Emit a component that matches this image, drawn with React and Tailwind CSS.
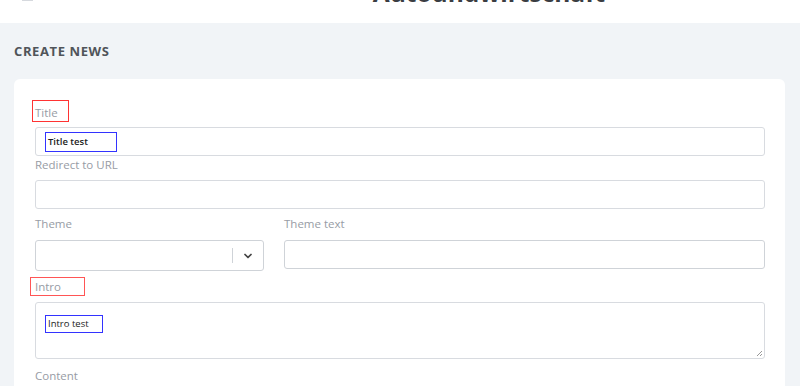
import React from "react";

const Label = ({ children, className = "" }) => (
  <div className={`text-[11.5px] text-[#979ca5] leading-[12px] ${className}`}>{children}</div>
);

const App = () => {
  return (
    <div className="h-screen overflow-hidden bg-[#f1f4f7]" style={{ fontFamily: "'Open Sans', sans-serif" }}>
      {/* Header */}
      <header className="h-[23px] bg-white overflow-hidden relative">
        <div className="absolute left-[22px] top-0 h-[1px] w-[11px] bg-[#d6d9de]" />
        <div className="flex justify-center pl-[178px]">
          <h1 className="text-[24.5px] font-bold text-[#3a3d42] leading-none -mt-[19px]">
            Autoundwirtschaft
          </h1>
        </div>
      </header>

      <main className="px-[14px] pt-[22px]">
        <h2 className="text-[13px] font-bold text-[#50545a] uppercase tracking-[0.6px] leading-[13px]">
          Create News
        </h2>

        <div className="mt-[21px] rounded-[6px] bg-white pl-[21px] pr-[20px] pt-[21px] pb-6 w-[771px]">
          {/* Title */}
          <Label>
            <span className="inline-block border border-[#ff3333] -ml-[3px] pl-[2px] pr-[10px] pt-[6px] pb-[2px]">
              Title
            </span>
          </Label>
          <div className="mt-[5px] h-[29px] rounded-[3px] border border-[#d8dbe0] flex items-center pl-[9px]">
            <span className="inline-block border border-[#3333ff] w-[72px] h-[20px] pl-[2px] text-[9.5px] font-semibold text-[#222] leading-[18px]">
              Title test
            </span>
          </div>

          {/* Redirect */}
          <Label className="mt-[3px]">Redirect to URL</Label>
          <div className="mt-[9px] h-[29px] rounded-[3px] border border-[#d8dbe0]" />

          {/* Theme row */}
          <div className="mt-[9px] flex gap-[20px]">
            <div className="w-[229px]">
              <Label>Theme</Label>
              <div className="mt-[10px] h-[31px] rounded-[3px] border border-[#cfd3d8] flex items-center justify-end">
                <div className="h-[15px] w-px bg-[#cfd3d8]" />
                <div className="w-[30px] flex justify-center">
                  <svg width="12" height="12" viewBox="0 0 24 24" fill="none" stroke="#444" strokeWidth="3.5" strokeLinecap="round" strokeLinejoin="round">
                    <path d="M6 9l6 6 6-6" />
                  </svg>
                </div>
              </div>
            </div>
            <div className="flex-1">
              <Label>Theme text</Label>
              <div className="mt-[10px] h-[29px] rounded-[3px] border border-[#cfd3d8]" />
            </div>
          </div>

          {/* Intro */}
          <Label className="mt-[6px]">
            <span className="inline-block border border-[#ff5555] -ml-[5px] pl-[4px] pr-[23px] pt-[3px] pb-[2px]">
              Intro
            </span>
          </Label>
          <div className="mt-[6px] h-[57px] rounded-[3px] border border-[#d8dbe0] relative pl-[9px] pt-[6px]">
            <span className="inline-block border border-[#3333ff] w-[58px] h-[18px] pl-[2px] text-[9.5px] font-medium text-[#222] leading-[16px]">
              Intro test
            </span>
            <svg className="absolute right-[1px] bottom-[1px]" width="7" height="7" viewBox="0 0 7 7" stroke="#999" strokeWidth="1">
              <path d="M1 6L6 1M4 6L6 4" />
            </svg>
          </div>

          {/* Content */}
          <Label className="mt-[11px]">Content</Label>
        </div>
      </main>
    </div>
  );
};

export default App;
